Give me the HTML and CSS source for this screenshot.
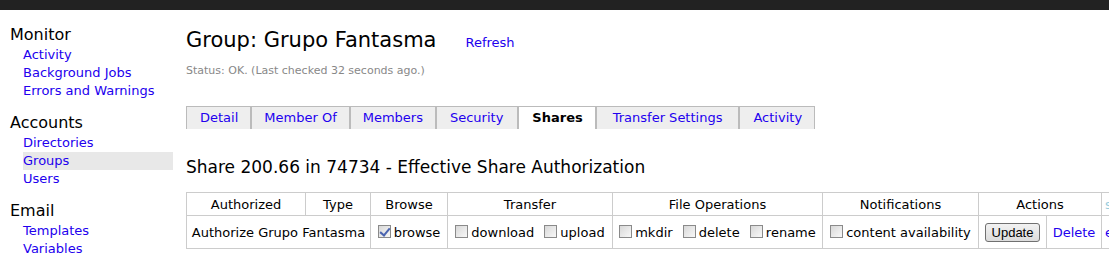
FILE: index.html
```html
<!DOCTYPE html>
<html lang="en">
<head>
<meta charset="UTF-8">
<title>Group: Grupo Fantasma</title>
<link rel="stylesheet" href="styles.css">
</head>
<body>
  <div class="top-bar"></div>
  <div class="page">
    <div class="sidebar">
      <h3 class="nav-title">Monitor</h3>
      <a class="nav-link" href="#">Activity</a>
      <a class="nav-link" href="#">Background Jobs</a>
      <a class="nav-link" href="#">Errors and Warnings</a>

      <h3 class="nav-title">Accounts</h3>
      <a class="nav-link" href="#">Directories</a>
      <a class="nav-link active" href="#">Groups</a>
      <a class="nav-link" href="#">Users</a>

      <h3 class="nav-title">Email</h3>
      <a class="nav-link" href="#">Templates</a>
      <a class="nav-link" href="#">Variables</a>
    </div>

    <div class="main">
      <div class="title-row">
        <h1 class="page-title">Group: Grupo Fantasma</h1>
        <a class="refresh" href="#">Refresh</a>
      </div>
      <div class="status">Status: OK. (Last checked 32 seconds ago.)</div>

      <div class="tabs">
        <a class="tab" href="#">Detail</a>
        <a class="tab narrow" href="#">Member Of</a>
        <a class="tab narrow" href="#">Members</a>
        <a class="tab wide" href="#">Security</a>
        <a class="tab selected" href="#">Shares</a>
        <a class="tab wider" href="#">Transfer Settings</a>
        <a class="tab" href="#">Activity</a>
      </div>

      <h2 class="section-title">Share 200.66 in 74734 - Effective Share Authorization</h2>

      <table class="auth-table">
        <colgroup>
          <col class="col-auth">
          <col class="col-type">
          <col class="col-browse">
          <col class="col-transfer">
          <col class="col-fileops">
          <col class="col-notify">
          <col class="col-update">
          <col class="col-delete">
          <col class="col-extra">
        </colgroup>
        <tr>
          <th>Authorized</th>
          <th>Type</th>
          <th>Browse</th>
          <th>Transfer</th>
          <th>File Operations</th>
          <th>Notifications</th>
          <th colspan="2">Actions</th>
          <th class="extra"><span class="faded">s</span></th>
        </tr>
        <tr>
          <td colspan="2">Authorize Grupo Fantasma</td>
          <td><label class="opt"><input type="checkbox" checked>browse</label></td>
          <td>
            <label class="opt"><input type="checkbox">download</label>
            <label class="opt"><input type="checkbox">upload</label>
          </td>
          <td>
            <label class="opt"><input type="checkbox">mkdir</label>
            <label class="opt"><input type="checkbox">delete</label>
            <label class="opt"><input type="checkbox">rename</label>
          </td>
          <td><label class="opt"><input type="checkbox">content availability</label></td>
          <td><button class="update-button">Update</button></td>
          <td><a href="#">Delete</a></td>
          <td class="extra"><a href="#">e</a></td>
        </tr>
      </table>
    </div>
  </div>
</body>
</html>
```

FILE: styles.css
```css
body {
    font-family: "DejaVu Sans", Verdana, sans-serif;
    margin: 0;
    padding: 0;
    color: #000;
    overflow: hidden;
  }
  a {
    color: #2200ee;
    text-decoration: none;
  }
  .top-bar {
    height: 10px;
    background-color: #222;
  }
  .page {
    display: flex;
  }
  .sidebar {
    width: 163px;
    flex: none;
    padding: 15px 0 0 10px;
    display: flex;
    flex-direction: column;
  }
  .nav-title {
    font-size: 16px;
    font-weight: normal;
    line-height: 20px;
    margin: 13px 0 1px 0;
  }
  .nav-title:first-child {
    margin-top: 0;
  }
  .nav-link {
    font-size: 13px;
    line-height: 18px;
    margin-left: 13px;
  }
  .nav-link.active {
    background-color: #e8e8e8;
  }
  .main {
    padding-left: 13px;
    flex: 1;
    min-width: 0;
  }
  .title-row {
    display: flex;
    align-items: baseline;
    margin-top: 16px;
  }
  .page-title {
    font-size: 21px;
    font-weight: normal;
    line-height: 28px;
    margin: 0 29px 0 0;
  }
  .refresh {
    font-size: 13px;
  }
  .status {
    font-size: 11px;
    color: #888;
    margin-top: 10px;
    line-height: 14px;
  }
  .tabs {
    display: flex;
    margin-top: 28px;
  }
  .tab {
    font-size: 13px;
    line-height: 22px;
    padding: 0 12px 0 13px;
    background-color: #eee;
    border-top: 1px solid #bbb;
    border-left: 1px solid #bbb;
    border-right: 1px solid #bbb;
  }
  .tab.narrow {
    padding: 0 12px;
  }
  .tab.wide {
    padding: 0 14px 0 13px;
  }
  .tab.wider {
    padding: 0 16px;
  }
  .tab.selected {
    background-color: #fff;
    color: #000;
    font-weight: bold;
  }
  .section-title {
    font-size: 17px;
    font-weight: normal;
    margin: 27px 0 0 0;
    line-height: 22px;
  }
  .auth-table {
    border-collapse: collapse;
    table-layout: fixed;
    width: 955px;
    margin-top: 14px;
    font-size: 13px;
    white-space: nowrap;
  }
  .auth-table th,
  .auth-table td {
    border: 1px solid #ccc;
    text-align: center;
    overflow: hidden;
  }
  .auth-table th {
    font-weight: normal;
    height: 22px;
    padding: 0;
  }
  .auth-table td {
    height: 32px;
    padding: 0;
  }
  .col-auth { width: 119px; }
  .col-type { width: 65px; }
  .col-browse { width: 77px; }
  .col-transfer { width: 165px; }
  .col-fileops { width: 210px; }
  .col-notify { width: 156px; }
  .col-update { width: 68px; }
  .col-delete { width: 55px; }
  .col-extra { width: 40px; }
  .auth-table .extra {
    text-align: left;
    padding-left: 3px;
  }
  .faded {
    color: #9cd;
  }
  .opt {
    margin: 0 3px;
  }
  .opt input {
    appearance: none;
    width: 13px;
    height: 13px;
    margin: 0 3px 0 0;
    border: 1px solid #8a8a8a;
    background: linear-gradient(135deg, #d8d8d8, #f8f8f8);
    vertical-align: -1px;
    position: relative;
  }
  .opt input:checked::after {
    content: "";
    position: absolute;
    left: 3px;
    top: 0px;
    width: 4px;
    height: 8px;
    border-right: 2px solid #4a64b0;
    border-bottom: 2px solid #4a64b0;
    transform: rotate(40deg);
  }
  .update-button {
    font-family: "Liberation Sans", Arial, sans-serif;
    font-size: 13px;
    padding: 1px 6px;
    border: 1px solid #707070;
    border-radius: 3px;
    background: linear-gradient(#f2f2f2, #dcdcdc);
    color: #000;
  }
```
